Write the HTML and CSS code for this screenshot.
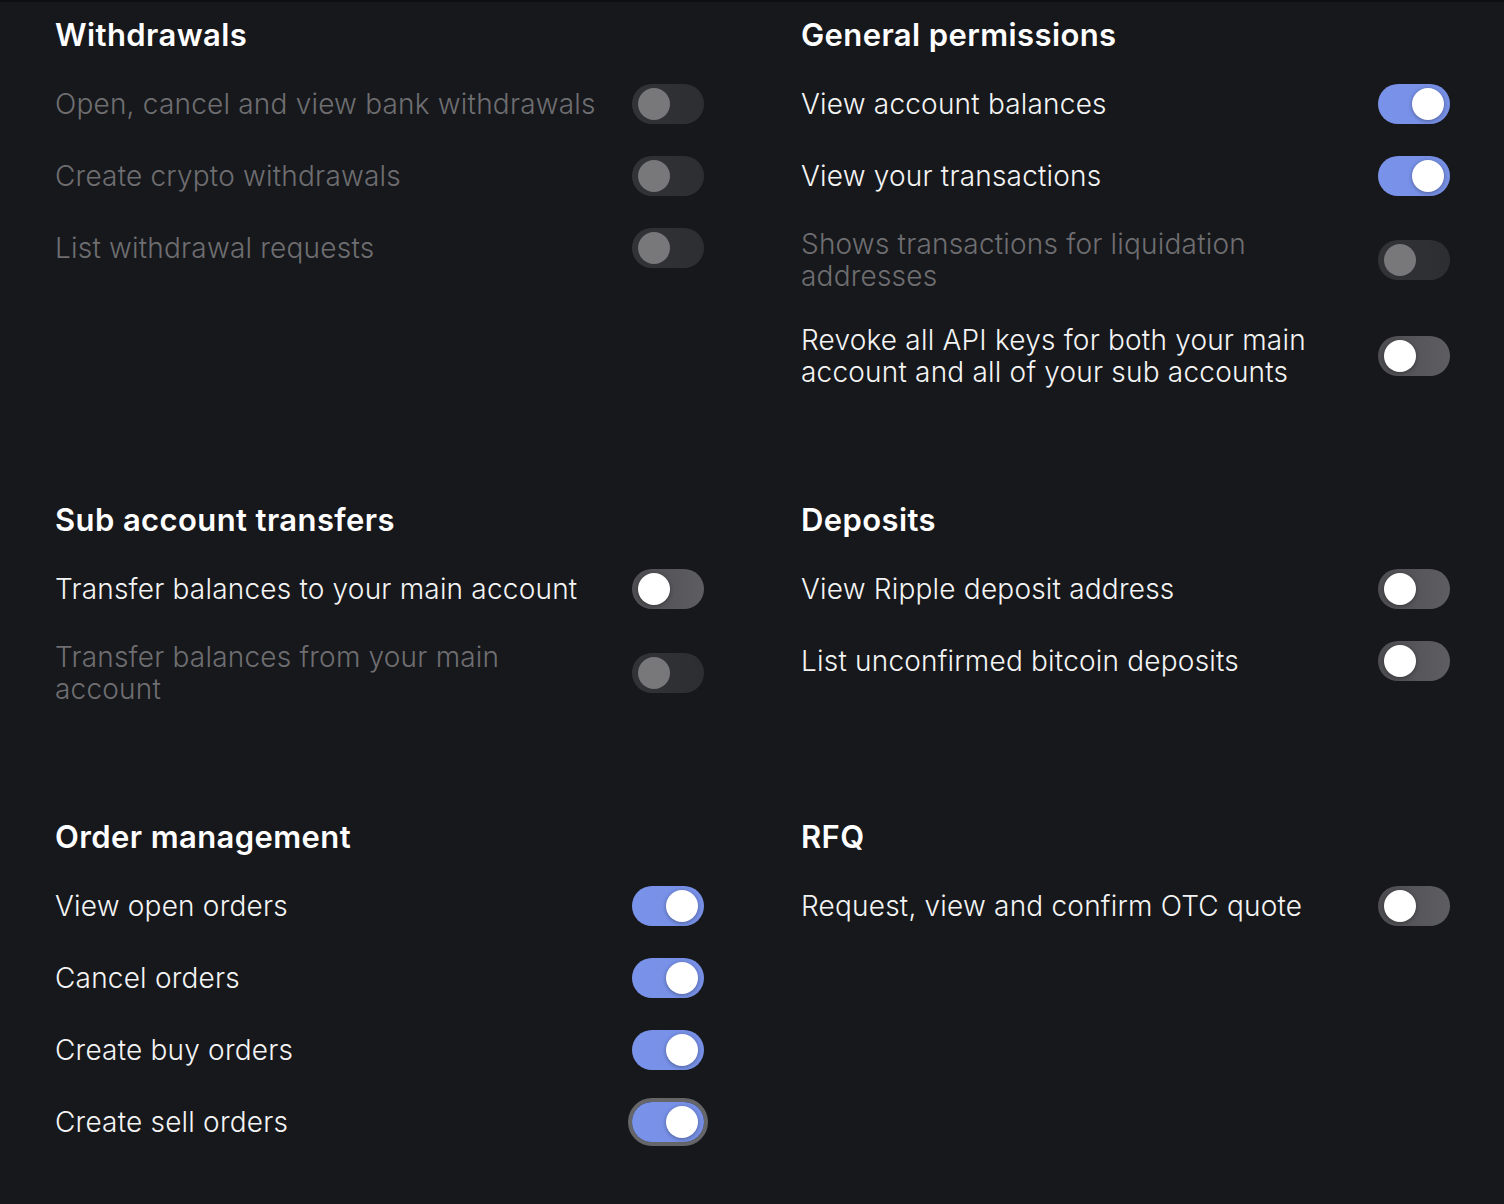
FILE: index.html
```html
<!DOCTYPE html>
<html lang="en">
<head>
    <meta charset="UTF-8">
    <meta name="viewport" content="width=device-width, initial-scale=1.0">
    <title>API key permissions</title>
    <link rel="stylesheet" href="styles.css">
</head>
<body>
    <div class="permissions">
        <section class="group">
            <h2>Withdrawals</h2>
            <div class="row disabled">
                <span class="label">Open, cancel and view bank withdrawals</span>
                <span class="switch"><span class="knob"></span></span>
            </div>
            <div class="row disabled">
                <span class="label">Create crypto withdrawals</span>
                <span class="switch"><span class="knob"></span></span>
            </div>
            <div class="row disabled">
                <span class="label">List withdrawal requests</span>
                <span class="switch"><span class="knob"></span></span>
            </div>
        </section>

        <section class="group">
            <h2>General permissions</h2>
            <div class="row">
                <span class="label">View account balances</span>
                <span class="switch on"><span class="knob"></span></span>
            </div>
            <div class="row">
                <span class="label">View your transactions</span>
                <span class="switch on"><span class="knob"></span></span>
            </div>
            <div class="row disabled">
                <span class="label">Shows transactions for liquidation addresses</span>
                <span class="switch"><span class="knob"></span></span>
            </div>
            <div class="row">
                <span class="label">Revoke all API keys for both your main account and all of your sub accounts</span>
                <span class="switch"><span class="knob"></span></span>
            </div>
        </section>

        <section class="group">
            <h2>Sub account transfers</h2>
            <div class="row">
                <span class="label">Transfer balances to your main account</span>
                <span class="switch"><span class="knob"></span></span>
            </div>
            <div class="row disabled">
                <span class="label">Transfer balances from your main account</span>
                <span class="switch"><span class="knob"></span></span>
            </div>
        </section>

        <section class="group">
            <h2>Deposits</h2>
            <div class="row">
                <span class="label">View Ripple deposit address</span>
                <span class="switch"><span class="knob"></span></span>
            </div>
            <div class="row">
                <span class="label">List unconfirmed bitcoin deposits</span>
                <span class="switch"><span class="knob"></span></span>
            </div>
        </section>

        <section class="group">
            <h2>Order management</h2>
            <div class="row">
                <span class="label">View open orders</span>
                <span class="switch on"><span class="knob"></span></span>
            </div>
            <div class="row">
                <span class="label">Cancel orders</span>
                <span class="switch on"><span class="knob"></span></span>
            </div>
            <div class="row">
                <span class="label">Create buy orders</span>
                <span class="switch on"><span class="knob"></span></span>
            </div>
            <div class="row">
                <span class="label">Create sell orders</span>
                <span class="switch on focused"><span class="knob"></span></span>
            </div>
        </section>

        <section class="group">
            <h2>RFQ</h2>
            <div class="row">
                <span class="label">Request, view and confirm OTC quote</span>
                <span class="switch"><span class="knob"></span></span>
            </div>
        </section>
    </div>
</body>
</html>
```

FILE: styles.css
```css
html, body {
    margin: 0;
    height: 100%;
}

body {
    background-color: #17181c;
    border-top: 2px solid #0e0f12;
    box-sizing: border-box;
    font-family: Inter, 'Noto Sans', sans-serif;
    color: #f2f2f2;
}

.permissions {
    display: grid;
    grid-template-columns: 649px 649px;
    column-gap: 97px;
    row-gap: 112px;
    padding: 13px 54px 0 55px;
}

.group {
    display: flex;
    flex-direction: column;
}

.group h2 {
    margin: 0 0 29px;
    font-size: 31px;
    line-height: 40px;
    font-weight: 600;
    letter-spacing: 0.4px;
    color: #ffffff;
}

.row {
    display: flex;
    align-items: center;
    gap: 32px;
    min-height: 40px;
    margin-bottom: 32px;
}

.row:last-child {
    margin-bottom: 0;
}

.label {
    flex: 1;
    font-size: 28px;
    line-height: 32px;
    font-weight: 300;
    letter-spacing: 0.2px;
    color: #f4f4f4;
}

.row.disabled .label {
    color: #6e6e71;
}

.switch {
    position: relative;
    flex: none;
    width: 72px;
    height: 40px;
    border-radius: 20px;
    background: linear-gradient(90deg, #4e4e52, #5e5e62);
}

.knob {
    position: absolute;
    top: 4px;
    left: 6px;
    width: 32px;
    height: 32px;
    border-radius: 50%;
    background-color: #ffffff;
    box-shadow: 0 1px 4px rgba(0, 0, 0, 0.35);
}

.switch.on {
    background: linear-gradient(90deg, #7a93ea, #7790e6);
}

.switch.on .knob {
    left: 34px;
}

.row.disabled .switch {
    background: linear-gradient(90deg, #323337, #2d2e32);
}

.row.disabled .knob {
    background-color: #78787b;
    box-shadow: none;
}

.switch.focused {
    box-shadow: 0 0 0 4px #666668;
}
```
